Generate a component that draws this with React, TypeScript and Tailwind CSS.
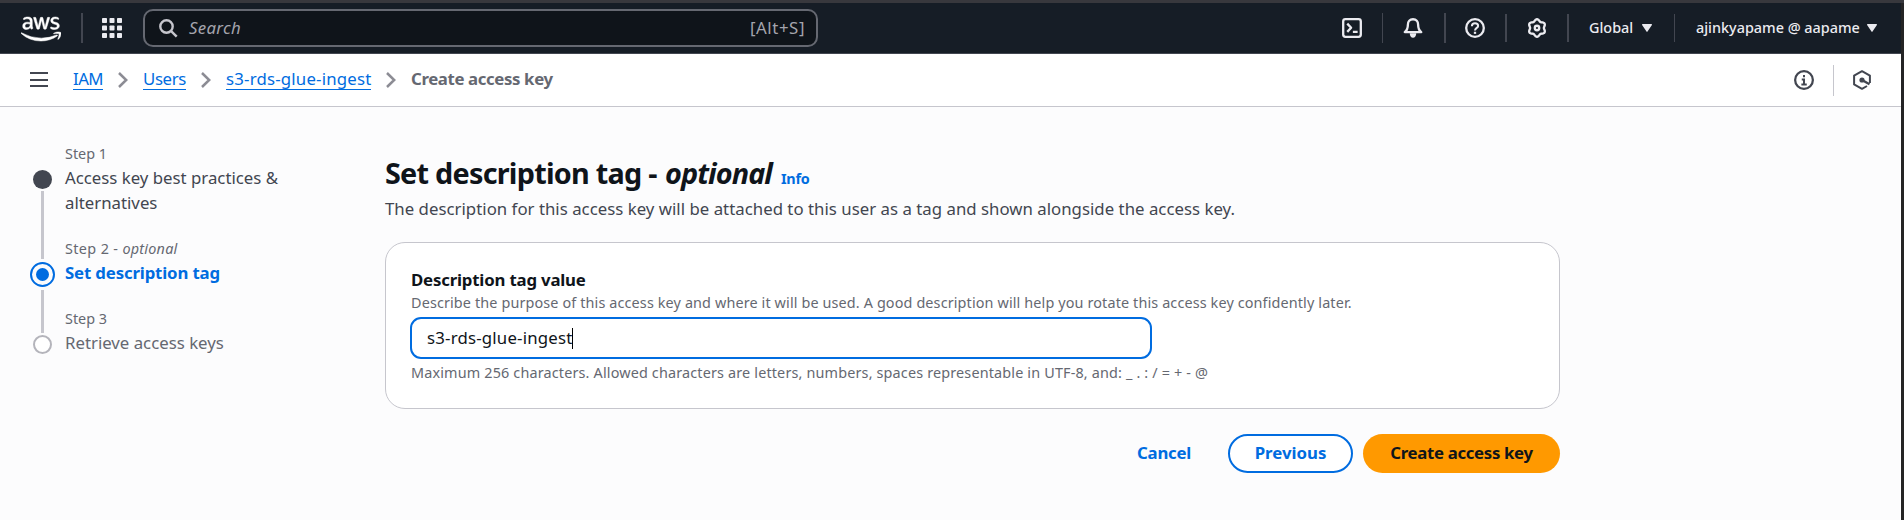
import type { ReactNode } from "react";
import { FaAws } from "react-icons/fa";

const gearPath =
  Array.from({ length: 72 }, (_, i) => {
    const a = (i * Math.PI) / 36;
    const r = 6.25 + 0.75 * Math.cos(6 * a);
    return `${i ? "L" : "M"}${(8 + r * Math.sin(a)).toFixed(2)} ${(8 - r * Math.cos(a)).toFixed(2)}`;
  }).join("") + "z";

function Divider({ className }: { className: string }) {
  return <span className={`shrink-0 bg-[#424650] ${className}`} />;
}

function AppsIcon() {
  const cells = [0, 7.5, 15];
  return (
    <svg className="ml-[19px] h-5 w-5 shrink-0" viewBox="0 0 20 20" fill="#ebebf0">
      {cells.map((y) => cells.map((x) => <rect key={`${x}-${y}`} x={x} y={y} width="5" height="5" rx="0.8" />))}
    </svg>
  );
}

function HeaderIcon({ className, children }: { className: string; children: ReactNode }) {
  return (
    <svg
      className={`h-5 w-5 shrink-0 ${className}`}
      viewBox="0 0 16 16"
      fill="none"
      stroke="#ebebf0"
      strokeWidth="1.85"
      strokeLinejoin="round"
    >
      {children}
    </svg>
  );
}

function Caret({ className }: { className: string }) {
  return (
    <svg className={`h-2 w-2.5 shrink-0 ${className}`} viewBox="0 0 10 8" fill="#ebebf0">
      <path d="M0.6 0h8.8c.5 0 .7.5.5.9L5.5 7.6c-.2.4-.8.4-1 0L.1.9C-.1.5.1 0 .6 0z" />
    </svg>
  );
}

function Header() {
  return (
    <header className="flex h-[51px] items-center border-b border-[#424650] bg-[#161d26] pl-[21px] text-[#ebebf0]">
      <FaAws className="mt-px h-8 w-[40px] shrink-0 stroke-white stroke-[8px] text-white" />
      <Divider className="ml-5 h-[30px] w-0.5" />
      <AppsIcon />
      <div className="ml-[21px] flex h-[38px] w-[675px] shrink-0 items-center rounded-[10px] border-2 border-[#656871] bg-[#0f141a] pl-[14px] pr-[11px] text-[16.8px] text-[#a4a4ad]">
        <svg className="h-[19px] w-[19px]" viewBox="0 0 19 19" fill="none" stroke="#c6c6cd" strokeWidth="2.4">
          <circle cx="7.5" cy="7.5" r="6.2" />
          <path d="M11.9 11.9l5.8 5.8" />
        </svg>
        <span className="ml-[11px] tracking-[0.33px] italic">Search</span>
        <span className="ml-auto tracking-[0.58px]">[Alt+S]</span>
      </div>
      <div className="ml-auto flex items-center pr-6">
        <HeaderIcon className="">
          <rect x="0.95" y="0.95" width="14.1" height="14.1" rx="1.8" />
          <path d="M4.2 4.5l3.1 3.3-3.1 3.300M8.700 11.100h3.800" />
        </HeaderIcon>
        <Divider className="ml-5 h-[30px] w-px" />
        <HeaderIcon className="ml-5">
          <path d="M8 1C5.400 1 3.900 2.900 3.900 5.300c0 3.200-.9 4.700-2.500 6h13.200c-1.600-1.300-2.500-2.800-2.500-6C12.100 2.900 10.600 1 8 1z" />
          <path d="M5.400 12.200h5.200c0 2.100-1.100 3.600-2.600 3.600s-2.600-1.500-2.600-3.600z" fill="#ebebf0" stroke="none" />
        </HeaderIcon>
        <Divider className="ml-[21px] h-[30px] w-0.5" />
        <HeaderIcon className="ml-[19px]">
          <circle cx="8" cy="8" r="7.050" />
          <path d="M5.500 6.500C5.500 5 6.600 4.200 8 4.200s2.500.8 2.500 2.100C10.500 7.900 8 8 8 10" strokeWidth="1.600" />
          <path d="M8 11v1.700" />
        </HeaderIcon>
        <Divider className="ml-5 h-7 w-0.5" />
        <HeaderIcon className="ml-5">
          <path d={gearPath} />
          <circle cx="8" cy="8" r="1.800" />
        </HeaderIcon>
        <Divider className="ml-5 h-7 w-0.5" />
        <span className="ml-[20px] w-[45px] text-[14.4px] font-medium">Global</span>
        <Caret className="ml-[8px]" />
        <Divider className="ml-[22px] h-7 w-px" />
        <span className="ml-[21px] w-[165px] text-[14.4px] font-medium whitespace-nowrap">ajinkyapame @ aapame</span>
        <Caret className="ml-[6px]" />
      </div>
    </header>
  );
}

function Chevron() {
  return (
    <svg className="mx-[15px] h-4 w-2.5 shrink-0" viewBox="0 0 10 16" fill="none" stroke="#8c8c94" strokeWidth="2.500">
      <path d="M1 1l7.200 7L1 15" />
    </svg>
  );
}

function Crumb({ className, children }: { className: string; children: ReactNode }) {
  return (
    <a
      className={`mb-0.5 h-[21px] shrink-0 border-b border-[#006ce0] leading-5 whitespace-nowrap text-[#006ce0] ${className}`}
    >
      {children}
    </a>
  );
}

function Breadcrumbs() {
  return (
    <nav className="flex h-[53px] items-center border-b border-[#c6c6cd] bg-white pr-[30px] pl-[30px] text-[16.800px]">
      <svg className="h-4 w-[18px]" viewBox="0 0 18 16" stroke="#424650" strokeWidth="2">
        <path d="M0 1h18M0 8h18M0 14h18" />
      </svg>
      <Crumb className="ml-[25px] w-[30px] tracking-[-0.540px]">IAM</Crumb>
      <Chevron />
      <Crumb className="w-[43px] tracking-[-0.350px]">Users</Crumb>
      <Chevron />
      <Crumb className="w-[145px] tracking-[0.200px]">s3-rds-glue-ingest</Crumb>
      <Chevron />
      <span className="mb-0.5 h-[21px] leading-5 font-bold tracking-[-0.370px] text-[#656871]">Create access key</span>
      <svg className="ml-auto h-5 w-5" viewBox="0 0 16 16" fill="none" stroke="#424650" strokeWidth="1.800">
        <circle cx="8" cy="8" r="7.100" />
        <path d="M8 4v1.700M6.200 7.500H8v4M5.900 11.500h4.300" strokeWidth="1.600" />
      </svg>
      <span className="ml-[19px] h-[31px] w-px bg-[#c6c6cd]" />
      <svg className="ml-[19px] h-5 w-[18px]" viewBox="0 0 18 20" fill="none" stroke="#424650" strokeWidth="2">
        <path d="M16.900 13V5.600L9 1.200 1.100 5.600v8.800L9 18.800l5-2.800" strokeLinejoin="round" />
        <path d="M9 10l7.500 4.200" strokeWidth="2.400" />
        <circle cx="9" cy="10" r="2.600" fill="#424650" stroke="none" />
      </svg>
    </nav>
  );
}

function Step({ marker, label, children }: { marker: ReactNode; label: ReactNode; children: ReactNode }) {
  return (
    <li className="flex">
      <div className="flex w-[25px] shrink-0 flex-col items-center">{marker}</div>
      <div className="ml-[10px] pb-[22px]">
        <div className="h-[23px] text-[14.400px] leading-6 text-[#656871]">{label}</div>
        {children}
      </div>
    </li>
  );
}

function Steps() {
  return (
    <ol className="w-[385px] shrink-0 pt-[35px] pl-[30px] text-[16.800px] leading-[25px]">
      <Step
        label="Step 1"
        marker={
          <>
            <span className="mt-7 h-[19px] w-[19px] rounded-full bg-[#424650]" />
            <span className="mt-[2px] w-[3px] flex-1 bg-[#c6c6cd]" />
          </>
        }
      >
        <div className="w-[230px] text-[#424650]">Access key best practices &amp; alternatives</div>
      </Step>
      <Step
        label={
          <>
            <span className="tracking-[0.370px]">Step 2 - </span>
            <i className="tracking-[0.220px]">optional</i>
          </>
        }
        marker={
          <>
            <span className="h-[22px] w-[3px] bg-[#c6c6cd]" />
            <span className="mt-[3px] flex h-[25px] w-[25px] items-center justify-center rounded-full border-2 border-[#006ce0]">
              <span className="h-[13px] w-[13px] rounded-full bg-[#006ce0]" />
            </span>
            <span className="mt-[3px] w-[3px] flex-1 bg-[#c6c6cd]" />
          </>
        }
      >
        <div className="font-bold tracking-[-0.150px] text-[#006ce0]">Set description tag</div>
      </Step>
      <Step
        label="Step 3"
        marker={
          <>
            <span className="h-[26px] w-[3px] bg-[#c6c6cd]" />
            <span className="mt-[2px] h-[19px] w-[19px] rounded-full border-2 border-[#b4b4bb] bg-white" />
          </>
        }
      >
        <div className="text-[#656871]">Retrieve access keys</div>
      </Step>
    </ol>
  );
}

function DescriptionForm() {
  return (
    <main className="w-[1175px] shrink-0 pt-[44px]">
      <h1 className="flex h-[43px] items-baseline whitespace-nowrap text-[28.800px] leading-[43px] font-bold text-[#0f141a]">
        <span className="w-[280px] tracking-[-0.750px]">Set description tag -</span>
        <i className="w-[108px] tracking-[-0.910px]">optional</i>
        <a className="ml-2 text-[14.400px] leading-5 tracking-[-0.270px] text-[#006ce0]">Info</a>
      </h1>
      <p className="mt-[2px] h-[25px] text-[16.800px] leading-[25px] tracking-[0.020px] text-[#424650]">
        The description for this access key will be attached to this user as a tag and shown alongside the access key.
      </p>
      <section className="mt-[21px] h-[167px] rounded-[20px] border border-[#c6c6cd] bg-white pt-6 pl-[25px]">
        <label className="block h-[26px] text-[16.800px] leading-[25px] font-bold tracking-[-0.180px] text-[#0f141a]">
          Description tag value
        </label>
        <div className="h-[23px] text-[14.400px] leading-5 tracking-[0.130px] text-[#656871]">
          Describe the purpose of this access key and where it will be used. A good description will help you rotate this
          access key confidently later.
        </div>
        <div className="mt-[1px] -ml-px flex h-[42px] w-[742px] items-center rounded-[11px] border-2 border-[#006ce0] pl-[15px] text-[16.800px] tracking-[0.200px] text-[#0f141a]">
          s3-rds-glue-ingest
          <span className="h-[21px] w-px bg-black" />
        </div>
        <div className="mt-[4px] text-[14.400px] leading-5 tracking-[0.160px] text-[#656871]">
          Maximum 256 characters. Allowed characters are letters, numbers, spaces representable in UTF-8, and: _ . : / =
          + - @
        </div>
      </section>
      <div className="mt-[25px] flex h-[39px] items-center justify-end text-[16.800px] font-bold">
        <button className="mr-[37px] pb-0.5 tracking-[-0.250px] text-[#006ce0]">Cancel</button>
        <button className="mr-[10px] h-[39px] w-[125px] rounded-[20px] border-2 border-[#006ce0] bg-white pb-0.5 text-[#006ce0]">
          Previous
        </button>
        <button className="h-[39px] w-[197px] rounded-[20px] bg-[#ff9900] pb-0.5 tracking-[-0.320px] text-[#0f141a]">
          Create access key
        </button>
      </div>
    </main>
  );
}

export default function App() {
  return (
    <div className="h-[520px] w-[1904px] overflow-hidden bg-[#38383d] pt-[3px] font-['Noto_Sans',sans-serif]">
      <div className="flex h-[517px] flex-col border-r-3 border-[#242425] bg-[#fcfcfd]">
        <Header />
        <Breadcrumbs />
        <div className="flex">
          <Steps />
          <DescriptionForm />
        </div>
      </div>
    </div>
  );
}
